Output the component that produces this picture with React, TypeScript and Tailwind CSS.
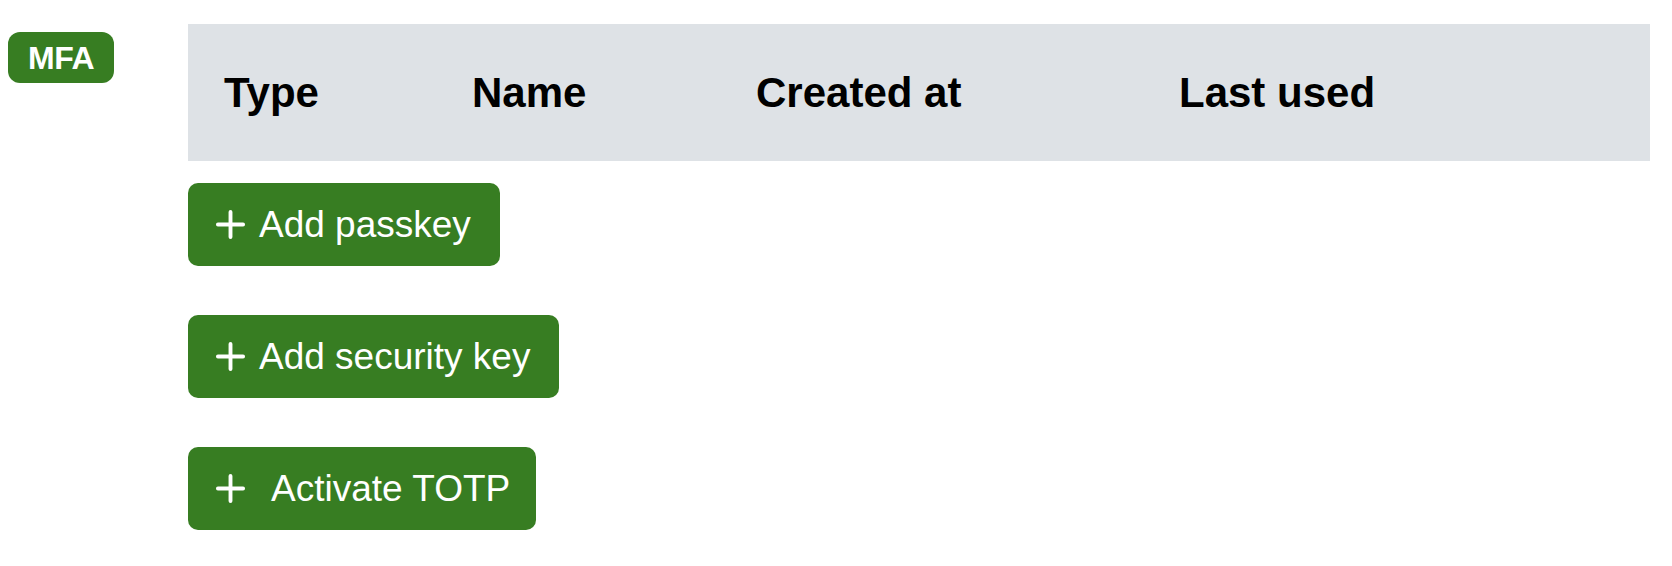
import type { ReactNode } from "react";

function PlusIcon() {
  return (
    <svg
      width="31"
      height="31"
      viewBox="0 0 16 16"
      fill="none"
      stroke="currentColor"
      strokeWidth="2"
      strokeLinecap="round"
      className="shrink-0"
    >
      <path d="M8 1.5v13M1.5 8h13" />
    </svg>
  );
}

interface ButtonProps {
  children: ReactNode;
  wide?: boolean;
}

function GreenButton({ children, wide }: ButtonProps) {
  return (
    <button
      type="button"
      className={
        wide
          ? "flex h-[83px] items-center gap-[25px] self-start rounded-[10px] bg-[#377d22] pl-[27px] pr-[26px] text-[37px] text-white"
          : "flex h-[83px] items-center gap-[13px] self-start rounded-[10px] bg-[#377d22] pl-[27px] pr-[29px] text-[37px] text-white"
      }
    >
      <PlusIcon />
      <span>{children}</span>
    </button>
  );
}

const columns = ["Type", "Name", "Created at", "Last used"];

export default function App() {
  return (
    <div className="flex min-h-[566px] bg-white font-['Liberation_Sans',Arial,sans-serif]">
      <div className="w-[188px] shrink-0 pl-[8px] pt-[32px]">
        <span className="inline-flex h-[51px] items-center rounded-[12px] bg-[#377d22] px-[20px] text-[32px] font-bold tracking-[-0.5px] text-white">
          MFA
        </span>
      </div>
      <div className="flex flex-1 flex-col pr-[22px] pt-[24px]">
        <div className="grid h-[137px] grid-cols-[248px_284px_423px_1fr] items-center bg-[#dee2e6] px-[36px] text-[42px] font-bold text-black">
          {columns.map((col) => (
            <span key={col}>{col}</span>
          ))}
        </div>
        <div className="mt-[22px] flex flex-col gap-[49px]">
          <GreenButton>Add passkey</GreenButton>
          <GreenButton>Add security key</GreenButton>
          <GreenButton wide>Activate TOTP</GreenButton>
        </div>
      </div>
    </div>
  );
}
